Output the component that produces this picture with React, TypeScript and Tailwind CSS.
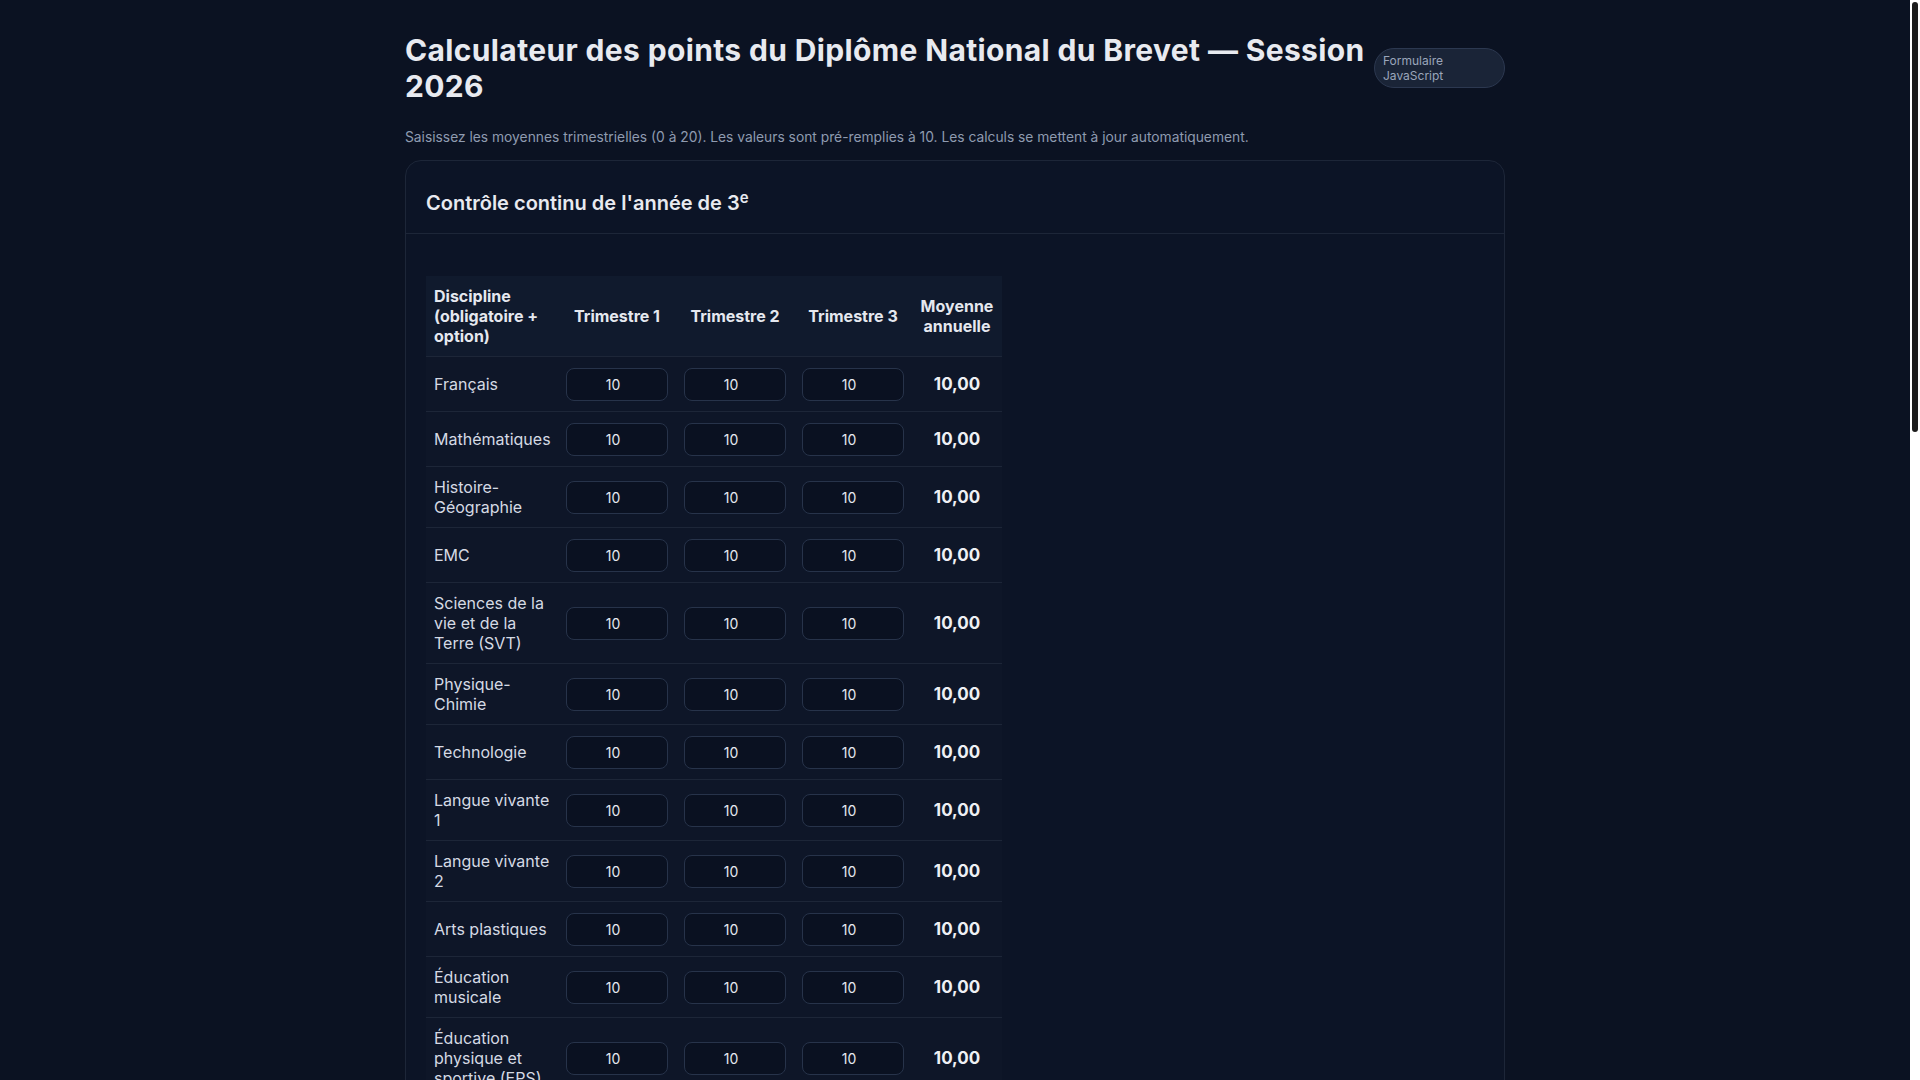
import { useState } from 'react';

const disciplines = [
  'Français',
  'Mathématiques',
  'Histoire-Géographie',
  'EMC',
  'Sciences de la vie et de la Terre (SVT)',
  'Physique-Chimie',
  'Technologie',
  'Langue vivante 1',
  'Langue vivante 2',
  'Arts plastiques',
  'Éducation musicale',
  'Éducation physique et sportive (EPS)',
  'Option facultative',
];

const epreuves = [
  { nom: 'Français', bareme: 100 },
  { nom: 'Mathématiques', bareme: 100 },
  { nom: 'Histoire-Géographie et EMC', bareme: 50 },
  { nom: 'Sciences', bareme: 50 },
  { nom: 'Oral', bareme: 100 },
];

const formatNote = (n: number) => n.toFixed(2).replace('.', ',');

const App = () => {
  const [notes, setNotes] = useState<number[][]>(disciplines.map(() => [10, 10, 10]));

  const changerNote = (ligne: number, col: number, valeur: string) => {
    const v = Math.max(0, Math.min(20, Number(valeur) || 0));
    setNotes((prev) => prev.map((r, i) => (i === ligne ? r.map((x, j) => (j === col ? v : x)) : r)));
  };

  const moyennes = notes.map((r) => (r[0] + r[1] + r[2]) / 3);
  const moyenneGenerale = moyennes.reduce((a, b) => a + b, 0) / moyennes.length;

  return (
    <div className="flex min-h-screen bg-[#0b1222] text-[#e5e8ef] font-['Inter',sans-serif]">
      <main className="min-w-0 flex-1">
        <div className="mx-auto max-w-[1100px] pt-[32px] pb-16">
          {/* En-tête */}
          <div className="flex items-center gap-1">
            <h1 className="flex-1 text-3xl font-bold tracking-[0.012em] text-[#e8eaf0]">
              Calculateur des points du Diplôme National du Brevet — Session 2026
            </h1>
            <span className="w-[131px] shrink-0 rounded-full border border-[#2c3850] bg-[#1a2437] px-2 py-1 text-[12px] leading-[1.25] text-[#9aa6bb]">
              Formulaire JavaScript
            </span>
          </div>
          <p className="mt-[23px] text-[13.8px] leading-5 text-[#8f9bb0]">
            Saisissez les moyennes trimestrielles (0 à 20). Les valeurs sont pré-remplies à 10. Les calculs se mettent à jour automatiquement.
          </p>

          {/* Carte contrôle continu */}
          <div className="mt-[13px] rounded-2xl border border-[#1d2638] bg-[#0c1426]">
            <div className="border-b border-[#1d2638] px-5 pt-7 pb-4">
              <h2 className="text-xl leading-7 font-semibold text-[#e8eaf0]">
                Contrôle continu de l'année de 3<sup>e</sup>
              </h2>
            </div>

            <div className="px-5 pt-[42px] pb-6">
              <table className="table-fixed w-[576px] border-collapse text-base leading-5">
                <colgroup>
                  <col className="w-[132px]" />
                  <col className="w-[118px]" />
                  <col className="w-[118px]" />
                  <col className="w-[118px]" />
                  <col className="w-[90px]" />
                </colgroup>
                <thead>
                  <tr className="bg-[#101a2d] border-b border-[#1d2638]">
                    <th className="px-2 py-2.5 text-left font-bold">Discipline (obligatoire + option)</th>
                    <th className="px-2 py-2.5 text-center font-bold">Trimestre 1</th>
                    <th className="px-2 py-2.5 text-center font-bold">Trimestre 2</th>
                    <th className="px-2 py-2.5 text-center font-bold">Trimestre 3</th>
                    <th className="px-2 py-2.5 text-center font-bold">Moyenne annuelle</th>
                  </tr>
                </thead>
                <tbody>
                  {disciplines.map((nom, i) => (
                    <tr key={nom} className="bg-[#0e1628] border-b border-[#1d2638]">
                      <td className="px-2 py-2.5 text-[#d5dae4]">{nom}</td>
                      {notes[i].map((n, j) => (
                        <td key={j} className="px-2 py-[10.5px]">
                          <input
                            type="number"
                            min={0}
                            max={20}
                            step={0.01}
                            value={n}
                            onChange={(e) => changerNote(i, j, e.target.value)}
                            className="block h-[33px] w-[102px] rounded-lg border border-[#27334a] bg-[#0a1121] pl-[7px] text-center text-[14px] text-[#e5e8ef] outline-none"
                          />
                        </td>
                      ))}
                      <td className="px-2 py-2.5 text-center text-[17px] font-bold text-[#eef0f4]">{formatNote(moyennes[i])}</td>
                    </tr>
                  ))}
                  <tr className="bg-[#101a2d]">
                    <td colSpan={4} className="px-2 py-3 font-bold">Moyenne générale</td>
                    <td className="px-2 py-3 text-center text-[17px] font-bold">{formatNote(moyenneGenerale)}</td>
                  </tr>
                </tbody>
              </table>
            </div>
          </div>

          {/* Carte épreuves terminales */}
          <div className="mt-6 rounded-2xl border border-[#1d2638] bg-[#0c1426]">
            <div className="border-b border-[#1d2638] px-5 pt-7 pb-4">
              <h2 className="text-xl leading-7 font-semibold text-[#e8eaf0]">Épreuves terminales</h2>
            </div>
            <div className="flex flex-col gap-3 px-5 py-6">
              {epreuves.map((e) => (
                <div key={e.nom} className="flex items-center justify-between border-b border-[#1d2638] pb-3">
                  <span className="text-[#d5dae4]">{e.nom}</span>
                  <div className="flex items-center gap-2 text-sm text-[#8f9bb0]">
                    <input
                      type="number"
                      defaultValue={e.bareme / 2}
                      className="h-[33px] w-[102px] rounded-lg border border-[#27334a] bg-[#0a1121] pl-[7px] text-center text-[14px] text-[#e5e8ef] outline-none"
                    />
                    / {e.bareme}
                  </div>
                </div>
              ))}
            </div>
          </div>

          {/* Carte résultat */}
          <div className="mt-6 rounded-2xl border border-[#1d2638] bg-[#0c1426]">
            <div className="border-b border-[#1d2638] px-5 pt-7 pb-4">
              <h2 className="text-xl leading-7 font-semibold text-[#e8eaf0]">Résultat</h2>
            </div>
            <div className="grid grid-cols-3 gap-4 px-5 py-6">
              <div className="rounded-xl border border-[#1d2638] bg-[#101a2d] p-4">
                <p className="text-sm text-[#8f9bb0]">Contrôle continu</p>
                <p className="mt-1 text-2xl font-bold">400 / 400</p>
              </div>
              <div className="rounded-xl border border-[#1d2638] bg-[#101a2d] p-4">
                <p className="text-sm text-[#8f9bb0]">Épreuves terminales</p>
                <p className="mt-1 text-2xl font-bold">200 / 400</p>
              </div>
              <div className="rounded-xl border border-[#1d2638] bg-[#101a2d] p-4">
                <p className="text-sm text-[#8f9bb0]">Total</p>
                <p className="mt-1 text-2xl font-bold">600 / 800</p>
              </div>
            </div>
          </div>
        </div>
      </main>

      {/* Barre de défilement de la fenêtre */}
      <aside className="sticky top-0 h-screen w-[10px] shrink-0 self-start bg-white px-[2px] pt-[2px]">
        <div className="h-[430px] rounded-[3px] bg-[#1c1c1c]" />
      </aside>
    </div>
  );
};

export default App;
